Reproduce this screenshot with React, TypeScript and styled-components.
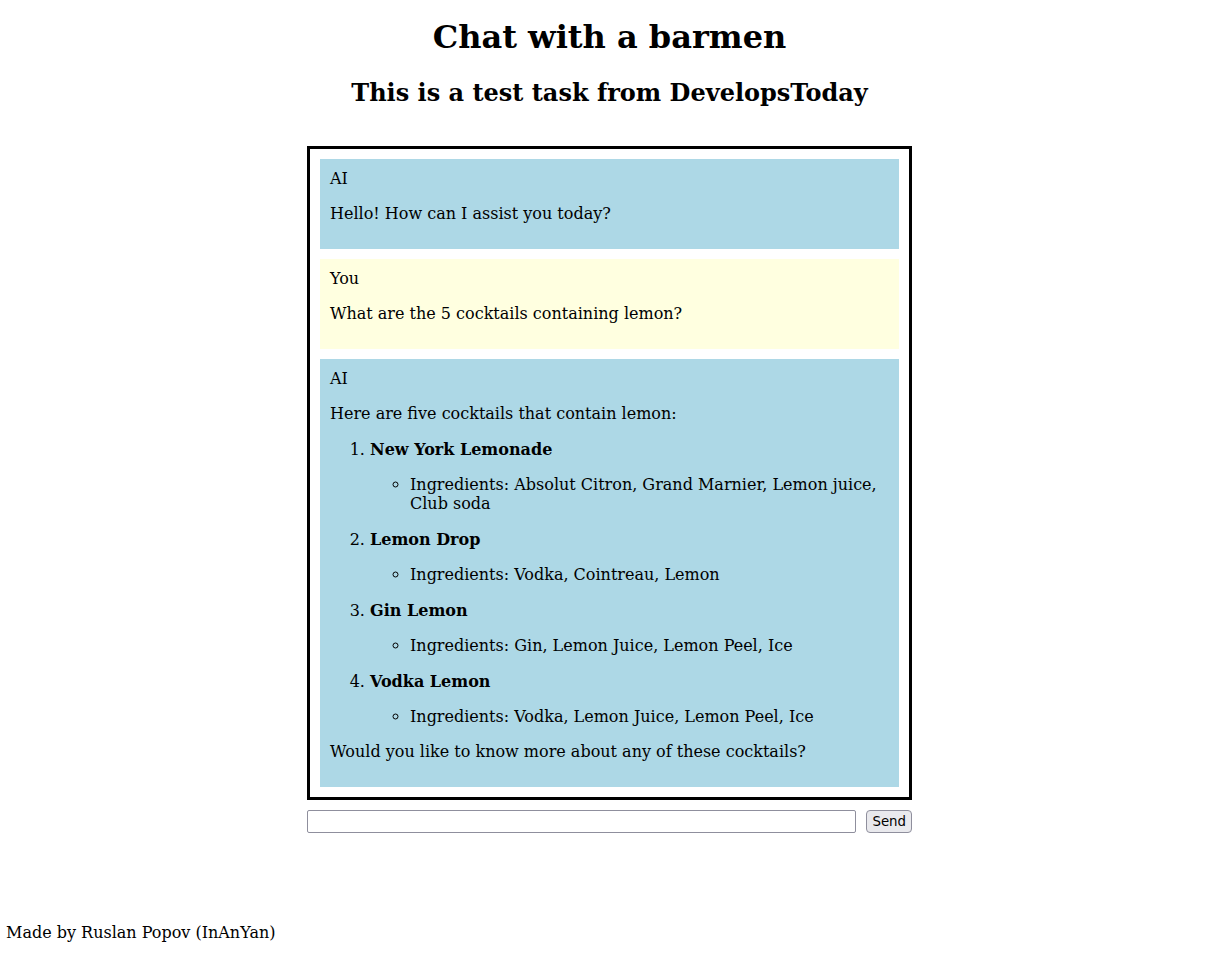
import React from "react";
import styled, { createGlobalStyle } from "styled-components";

const GlobalStyle = createGlobalStyle`
  html, body { margin: 0; padding: 0; background: #ffffff; }
  body { font-family: "DejaVu Serif", serif; font-size: 16px; color: #000; }
`;

const Page = styled.div`
  min-height: 100vh;
  box-sizing: border-box;
  display: flex;
  flex-direction: column;
  padding: 0 8px 0 12px;
`;

const Title = styled.h1`
  font-size: 32px;
  font-weight: bold;
  text-align: center;
  margin: 18.44px 0 21.44px;
`;

const Subtitle = styled.h2`
  font-size: 24px;
  font-weight: bold;
  text-align: center;
  margin: 0 0 39px;
`;

const ChatBox = styled.div`
  width: 605px;
  box-sizing: border-box;
  margin: 0 auto;
  border: 3px solid #000;
  padding: 10px 10px 0;
`;

const Message = styled.div<{ $who: "ai" | "user" }>`
  background: ${(p) => (p.$who === "ai" ? "#add8e6" : "#ffffe0")};
  padding: 10px;
  margin-bottom: 10px;
  display: flow-root;
  & p { margin: 16px 0; }
`;

const Author = styled.div``;

const NumList = styled.ol`
  margin: 16px 0;
  padding-left: 40px;
`;

const NumItem = styled.li`
  padding-top: 1px;
  &:first-child > p:first-child { margin-top: 0; }
`;

const SubList = styled.ul`
  margin: 0;
  padding-left: 40px;
  list-style-type: circle;
`;

const InputRow = styled.form`
  width: 605px;
  margin: 10px auto 0;
  display: flex;
  gap: 10px;
  align-items: center;
`;

const TextInput = styled.input`
  flex: 1;
  height: 23px;
  box-sizing: border-box;
  border: 1px solid #8f8f9d;
  border-radius: 2px;
  background: #fff;
  font-family: "DejaVu Sans", sans-serif;
  font-size: 13.33px;
  padding: 1px 2px;
`;

const SendButton = styled.button`
  height: 23px;
  box-sizing: border-box;
  font-family: "DejaVu Sans", sans-serif;
  font-size: 13.33px;
  padding: 1px 5px;
  border: 1px solid #8f8f9d;
  border-radius: 4px;
  background: #e9e9ed;
  color: #000;
`;

const Footer = styled.p`
  margin: auto 0 12px -6px;
  font-size: 16px;
`;

const cocktails = [
  { name: "New York Lemonade", ing: "Absolut Citron, Grand Marnier, Lemon juice, Club soda" },
  { name: "Lemon Drop", ing: "Vodka, Cointreau, Lemon" },
  { name: "Gin Lemon", ing: "Gin, Lemon Juice, Lemon Peel, Ice" },
  { name: "Vodka Lemon", ing: "Vodka, Lemon Juice, Lemon Peel, Ice" },
];

export default function App() {
  return (
    <>
      <GlobalStyle />
      <Page>
        <Title>Chat with a barmen</Title>
        <Subtitle>This is a test task from DevelopsToday</Subtitle>
        <ChatBox>
          <Message $who="ai">
            <Author>AI</Author>
            <p>Hello! How can I assist you today?</p>
          </Message>
          <Message $who="user">
            <Author>You</Author>
            <p>What are the 5 cocktails containing lemon?</p>
          </Message>
          <Message $who="ai">
            <Author>AI</Author>
            <p>Here are five cocktails that contain lemon:</p>
            <NumList>
              {cocktails.map((c) => (
                <NumItem key={c.name}>
                  <p>
                    <strong>{c.name}</strong>
                  </p>
                  <SubList>
                    <li>Ingredients: {c.ing}</li>
                  </SubList>
                </NumItem>
              ))}
            </NumList>
            <p>Would you like to know more about any of these cocktails?</p>
          </Message>
        </ChatBox>
        <InputRow onSubmit={(e) => e.preventDefault()}>
          <TextInput type="text" />
          <SendButton type="submit">Send</SendButton>
        </InputRow>
        <Footer>Made by Ruslan Popov (InAnYan)</Footer>
      </Page>
    </>
  );
}
